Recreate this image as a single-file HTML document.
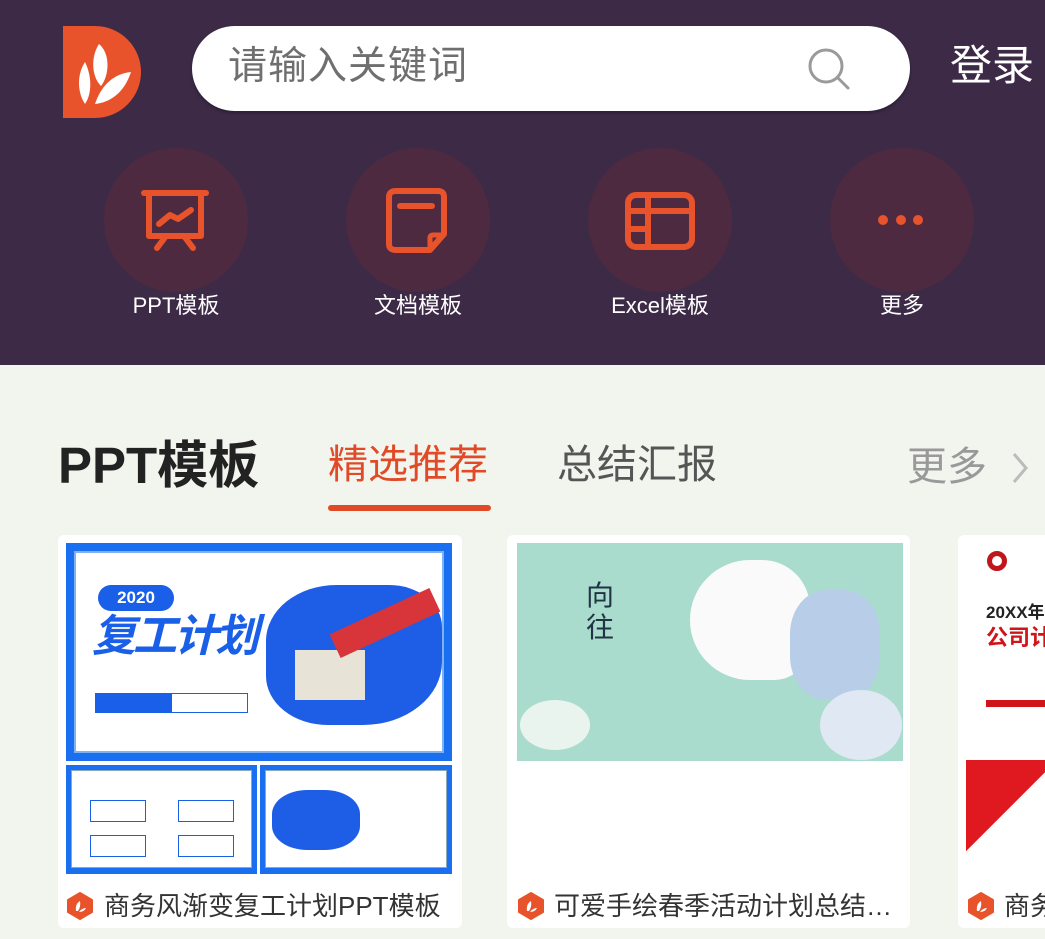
<!DOCTYPE html>
<html><head><meta charset="utf-8">
<style>
*{margin:0;padding:0;box-sizing:border-box}
body{width:1045px;height:939px;overflow:hidden;background:#f2f4ee;font-family:"Liberation Sans","Noto Sans CJK SC",sans-serif;position:relative}
.abs{position:absolute}
.hdr{left:0;top:0;width:1045px;height:365px;background:#3d2a47}
.search{left:192px;top:26px;width:718px;height:85px;background:#fff;border-radius:43px;box-shadow:0 2px 3px rgba(0,0,0,.3)}
.ph{left:228px;top:41px;font-size:39px;color:#6f6f6f;line-height:52px;letter-spacing:1px}
.login{left:950px;top:39px;font-size:42px;color:#fff;line-height:54px}
.circ{width:144px;height:144px;border-radius:50%;background:#4e2a40;top:148px}
.lbl{top:292px;font-size:22px;color:#fff;width:200px;text-align:center;line-height:28px}
.card{background:#fff;border-radius:6px;top:535px;height:393px}
.ttl{font-size:26px;color:#333;line-height:34px;top:889px;white-space:nowrap}
.hex{width:26px;height:28px}
</style></head><body>
<div class="abs hdr"></div>
<svg class="abs" style="left:63px;top:26px" width="78" height="92" viewBox="0 0 78 92">
<path d="M0 0H32A46 46 0 0 1 32 92H0Z" fill="#e8532b"/>
<path d="M36 18C48 28 46 50 38 60C28 50 28 30 36 18Z" fill="#fff"/>
<path d="M22 36C14 48 14 66 22 78C30 66 28 48 22 36Z" fill="#fff"/>
<path d="M68 46C50 48 38 60 32 78C50 76 62 64 68 46Z" fill="#fff"/>
</svg>
<div class="abs search"></div>
<div class="abs ph">请输入关键词</div>
<svg class="abs" style="left:806px;top:46px" width="46" height="46" viewBox="0 0 46 46"><circle cx="20" cy="20" r="16" fill="none" stroke="#9a9a9a" stroke-width="3"/><path d="M32 32L42 42" stroke="#9a9a9a" stroke-width="3" stroke-linecap="round"/></svg>
<div class="abs login">登录</div>

<div class="abs circ" style="left:104px"></div>
<div class="abs circ" style="left:346px"></div>
<div class="abs circ" style="left:588px"></div>
<div class="abs circ" style="left:830px"></div>
<svg class="abs" style="left:140px;top:188px" width="72" height="72" viewBox="0 0 72 72" fill="none" stroke="#e8532b" stroke-width="6" stroke-linecap="round" stroke-linejoin="round">
<path d="M4 5H66"/><path d="M9 6V48H61V6"/><path d="M19 36L30 27L38 31L51 22"/><path d="M26 48L17 60M44 48L53 60"/></svg>
<svg class="abs" style="left:384px;top:188px" width="68" height="68" viewBox="0 0 68 68" fill="none" stroke="#e8532b" stroke-width="6" stroke-linejoin="round" stroke-linecap="round">
<path d="M12 3H54Q60 3 60 9V46L46 62H12Q5 62 5 56V9Q5 3 12 3Z"/><path d="M16 18H48"/><path d="M46 62V50Q46 47 49 47H60" stroke-width="5"/></svg>
<svg class="abs" style="left:624px;top:191px" width="72" height="60" viewBox="0 0 72 60" fill="none" stroke="#e8532b" stroke-width="6" stroke-linejoin="round">
<rect x="4" y="4" width="64" height="52" rx="8"/><path d="M24 4V56M4 20H68M4 38H24"/></svg>
<div class="abs" style="left:878px;top:215px;width:10px;height:10px;border-radius:50%;background:#e8532b"></div>
<div class="abs" style="left:896px;top:215px;width:10px;height:10px;border-radius:50%;background:#e8532b"></div>
<div class="abs" style="left:913px;top:215px;width:10px;height:10px;border-radius:50%;background:#e8532b"></div>
<div class="abs lbl" style="left:76px">PPT模板</div>
<div class="abs lbl" style="left:318px">文档模板</div>
<div class="abs lbl" style="left:560px">Excel模板</div>
<div class="abs lbl" style="left:802px">更多</div>

<div class="abs" style="left:58px;top:433px;font-size:51px;font-weight:bold;color:#222;line-height:66px">PPT模板</div>
<div class="abs" style="left:328px;top:437px;font-size:40px;color:#e04a26;line-height:56px">精选推荐</div>
<div class="abs" style="left:328px;top:505px;width:163px;height:6px;border-radius:3px;background:#e04a26"></div>
<div class="abs" style="left:557px;top:437px;font-size:40px;color:#555;line-height:56px">总结汇报</div>
<div class="abs" style="left:907px;top:439px;font-size:40px;color:#999;line-height:56px">更多</div>
<svg class="abs" style="left:1008px;top:450px" width="24" height="36" viewBox="0 0 24 36"><path d="M6 4L18 18L6 32" fill="none" stroke="#bbb" stroke-width="3"/></svg>

<div class="abs card" style="left:58px;width:404px"></div>
<div class="abs card" style="left:507px;width:403px"></div>
<div class="abs card" style="left:958px;width:100px"></div>

<!-- card1 image -->
<div class="abs" style="left:66px;top:543px;width:386px;height:218px;background:#1a6ff0"></div>
<div class="abs" style="left:74px;top:551px;width:370px;height:202px;background:#fff;border:2px solid #7db2f5"></div>
<div class="abs" style="left:98px;top:585px;width:76px;height:26px;border-radius:13px;background:#1a5fe8;color:#fff;font-size:17px;font-weight:bold;text-align:center;line-height:26px">2020</div>
<div class="abs" style="left:92px;top:612px;font-size:44px;font-weight:bold;font-style:italic;color:#1a5fe8;line-height:50px;letter-spacing:-3px">复工计划</div>
<div class="abs" style="left:95px;top:693px;width:76px;height:20px;background:#1a5fe8"></div>
<div class="abs" style="left:171px;top:693px;width:77px;height:20px;border:1px solid #1a5fe8"></div>
<div class="abs" style="left:266px;top:585px;width:176px;height:140px;background:#1e5de6;border-radius:40% 30% 45% 35%"></div>
<div class="abs" style="left:295px;top:650px;width:70px;height:50px;background:#e7e3d6"></div>
<div class="abs" style="left:330px;top:610px;width:110px;height:26px;background:#d8353a;transform:rotate(-25deg)"></div>
<div class="abs" style="left:66px;top:765px;width:191px;height:109px;background:#1a6ff0"></div>
<div class="abs" style="left:71px;top:770px;width:181px;height:98px;background:#fff;border:1px solid #8ab"></div>
<div class="abs" style="left:260px;top:765px;width:192px;height:109px;background:#1a6ff0"></div>
<div class="abs" style="left:265px;top:770px;width:182px;height:98px;background:#fff;border:1px solid #8ab"></div>
<div class="abs" style="left:272px;top:790px;width:88px;height:60px;border-radius:40%;background:#1e5de6"></div>
<div class="abs" style="left:90px;top:800px;width:56px;height:22px;border:1px solid #1a5fe8"></div>
<div class="abs" style="left:178px;top:800px;width:56px;height:22px;border:1px solid #1a5fe8"></div>
<div class="abs" style="left:90px;top:835px;width:56px;height:22px;border:1px solid #1a5fe8"></div>
<div class="abs" style="left:178px;top:835px;width:56px;height:22px;border:1px solid #1a5fe8"></div>

<!-- card2 image -->
<div class="abs" style="left:517px;top:543px;width:386px;height:218px;background:#a9dccd"></div>
<div class="abs" style="left:690px;top:560px;width:120px;height:120px;border-radius:50% 40% 30% 50%;background:#fafafa"></div>
<div class="abs" style="left:790px;top:590px;width:90px;height:110px;border-radius:40%;background:#b7cde8"></div>
<div class="abs" style="left:520px;top:700px;width:70px;height:50px;border-radius:50%;background:#eaf4ee"></div>
<div class="abs" style="left:820px;top:690px;width:82px;height:70px;border-radius:50%;background:#dfe8f3"></div>
<div class="abs" style="left:586px;top:580px;font-size:28px;color:#234;line-height:32px;width:30px">向往</div>

<!-- card3 image -->
<div class="abs" style="left:958px;top:535px;width:87px;height:345px;overflow:hidden">
<div class="abs" style="left:29px;top:16px;width:20px;height:20px;border-radius:50%;border:5px solid #c0151b"></div>
<div class="abs" style="left:28px;top:63px;font-size:17px;font-weight:bold;color:#222;white-space:nowrap">20XX年</div>
<div class="abs" style="left:28px;top:85px;font-size:22px;font-weight:bold;color:#d0141a;white-space:nowrap">公司计</div>
<div class="abs" style="left:28px;top:165px;width:70px;height:7px;background:#d0141a"></div>
<div class="abs" style="left:8px;top:225px;width:90px;height:113px;background:linear-gradient(135deg,#e01820 0 45%,#ffffff 45%);border-radius:0 0 0 8px"></div>
</div>

<svg class="abs hex" style="left:67px;top:892px" viewBox="0 0 26 28"><path d="M13 1L25 8V20L13 27L1 20V8Z" fill="#e8532b" stroke="#e8532b" stroke-linejoin="round" stroke-width="2"/><path d="M9 19Q8 12 13 9Q14 15 11 19M12 20Q15 16 19 16Q17 20 12 20" fill="#fff"/></svg>
<div class="abs ttl" style="left:104px">商务风渐变复工计划PPT模板</div>
<svg class="abs hex" style="left:518px;top:892px" viewBox="0 0 26 28"><path d="M13 1L25 8V20L13 27L1 20V8Z" fill="#e8532b" stroke="#e8532b" stroke-linejoin="round" stroke-width="2"/><path d="M9 19Q8 12 13 9Q14 15 11 19M12 20Q15 16 19 16Q17 20 12 20" fill="#fff"/></svg>
<div class="abs ttl" style="left:554px">可爱手绘春季活动计划总结…</div>
<svg class="abs hex" style="left:968px;top:892px" viewBox="0 0 26 28"><path d="M13 1L25 8V20L13 27L1 20V8Z" fill="#e8532b" stroke="#e8532b" stroke-linejoin="round" stroke-width="2"/><path d="M9 19Q8 12 13 9Q14 15 11 19M12 20Q15 16 19 16Q17 20 12 20" fill="#fff"/></svg>
<div class="abs ttl" style="left:1004px">商务</div>
</body></html>
